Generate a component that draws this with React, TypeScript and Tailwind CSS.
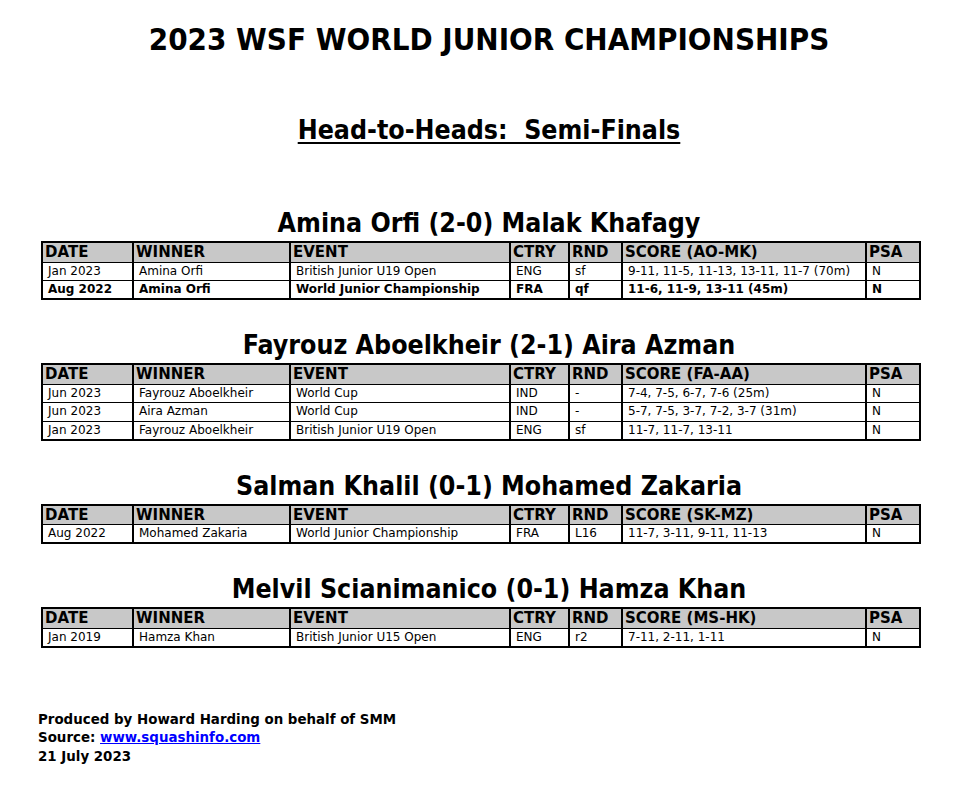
import React from 'react';

type Match = {
    date: string;
    winner: string;
    event: string;
    ctry: string;
    rnd: string;
    score: string;
    psa: string;
    bold?: boolean;
};

type Section = {
    title: string;
    scoreLabel: string;
    matches: Match[];
};

const sections: Section[] = [
    {
        title: 'Amina Orfi (2-0) Malak Khafagy',
        scoreLabel: 'SCORE (AO-MK)',
        matches: [
            { date: 'Jan 2023', winner: 'Amina Orfi', event: 'British Junior U19 Open', ctry: 'ENG', rnd: 'sf', score: '9-11, 11-5, 11-13, 13-11, 11-7 (70m)', psa: 'N' },
            { date: 'Aug 2022', winner: 'Amina Orfi', event: 'World Junior Championship', ctry: 'FRA', rnd: 'qf', score: '11-6, 11-9, 13-11 (45m)', psa: 'N', bold: true },
        ],
    },
    {
        title: 'Fayrouz Aboelkheir (2-1) Aira Azman',
        scoreLabel: 'SCORE (FA-AA)',
        matches: [
            { date: 'Jun 2023', winner: 'Fayrouz Aboelkheir', event: 'World Cup', ctry: 'IND', rnd: '-', score: '7-4, 7-5, 6-7, 7-6 (25m)', psa: 'N' },
            { date: 'Jun 2023', winner: 'Aira Azman', event: 'World Cup', ctry: 'IND', rnd: '-', score: '5-7, 7-5, 3-7, 7-2, 3-7 (31m)', psa: 'N' },
            { date: 'Jan 2023', winner: 'Fayrouz Aboelkheir', event: 'British Junior U19 Open', ctry: 'ENG', rnd: 'sf', score: '11-7, 11-7, 13-11', psa: 'N' },
        ],
    },
    {
        title: 'Salman Khalil (0-1) Mohamed Zakaria',
        scoreLabel: 'SCORE (SK-MZ)',
        matches: [
            { date: 'Aug 2022', winner: 'Mohamed Zakaria', event: 'World Junior Championship', ctry: 'FRA', rnd: 'L16', score: '11-7, 3-11, 9-11, 11-13', psa: 'N' },
        ],
    },
    {
        title: 'Melvil Scianimanico (0-1) Hamza Khan',
        scoreLabel: 'SCORE (MS-HK)',
        matches: [
            { date: 'Jan 2019', winner: 'Hamza Khan', event: 'British Junior U15 Open', ctry: 'ENG', rnd: 'r2', score: '7-11, 2-11, 1-11', psa: 'N' },
        ],
    },
];

const headCell = 'border-x-2 border-y border-black bg-[#c8c8c8] h-[20px] px-[2px] text-left align-middle text-[15px] leading-[18px] font-bold';
const bodyCell = 'border-x-2 border-y border-black h-[18.5px] pl-[5px] pr-[2px] text-left align-middle text-[12px] leading-[15px] whitespace-nowrap';

const HeadToHead = ({ section }: { section: Section }) => (
    <div className="mt-[30px] first:mt-0">
        <h3 className="w-[896px] text-center text-[26.5px] leading-[30px] font-bold [font-stretch:condensed]">{section.title}</h3>
        <table className="mt-[3px] w-[878px] table-fixed border-collapse border-2 border-black">
            <colgroup>
                <col className="w-[91px]" />
                <col className="w-[157px]" />
                <col className="w-[220px]" />
                <col className="w-[59px]" />
                <col className="w-[53px]" />
                <col className="w-[244px]" />
                <col className="w-[54px]" />
            </colgroup>
            <thead>
                <tr>
                    <th className={headCell}>DATE</th>
                    <th className={headCell}>WINNER</th>
                    <th className={headCell}>EVENT</th>
                    <th className={headCell}>CTRY</th>
                    <th className={headCell}>RND</th>
                    <th className={headCell}>{section.scoreLabel}</th>
                    <th className={headCell}>PSA</th>
                </tr>
            </thead>
            <tbody>
                {section.matches.map((m, i) => (
                    <tr key={i} className={m.bold ? 'font-bold' : ''}>
                        <td className={bodyCell}>{m.date}</td>
                        <td className={bodyCell}>{m.winner}</td>
                        <td className={bodyCell}>{m.event}</td>
                        <td className={bodyCell}>{m.ctry}</td>
                        <td className={bodyCell}>{m.rnd}</td>
                        <td className={bodyCell}>{m.score}</td>
                        <td className={bodyCell}>{m.psa}</td>
                    </tr>
                ))}
            </tbody>
        </table>
    </div>
);

export default function App() {
    return (
        <div className="min-h-screen bg-white text-black font-['DejaVu_Sans',Verdana,sans-serif] pl-[41px] pt-[21px]">
            <h1 className="w-[896px] text-center text-[31px] leading-[36px] font-bold [font-stretch:condensed]">
                2023 WSF WORLD JUNIOR CHAMPIONSHIPS
            </h1>
            <h2 className="mt-[58px] w-[896px] text-center text-[26.5px] leading-[30px] font-bold [font-stretch:condensed]">
                <span className="underline decoration-2 underline-offset-[3px]">Head-to-Heads:&nbsp; Semi-Finals</span>
            </h2>

            <div className="mt-[63px]">
                {sections.map((s, i) => (
                    <HeadToHead key={i} section={s} />
                ))}
            </div>

            <div className="mt-[63px] -ml-[3px] text-[13.4px] leading-[18.5px] font-bold">
                <p>Produced by Howard Harding on behalf of SMM</p>
                <p>
                    Source: <a href="#" className="text-[#0000ff] underline">www.squashinfo.com</a>
                </p>
                <p>21 July 2023</p>
            </div>
        </div>
    );
}
